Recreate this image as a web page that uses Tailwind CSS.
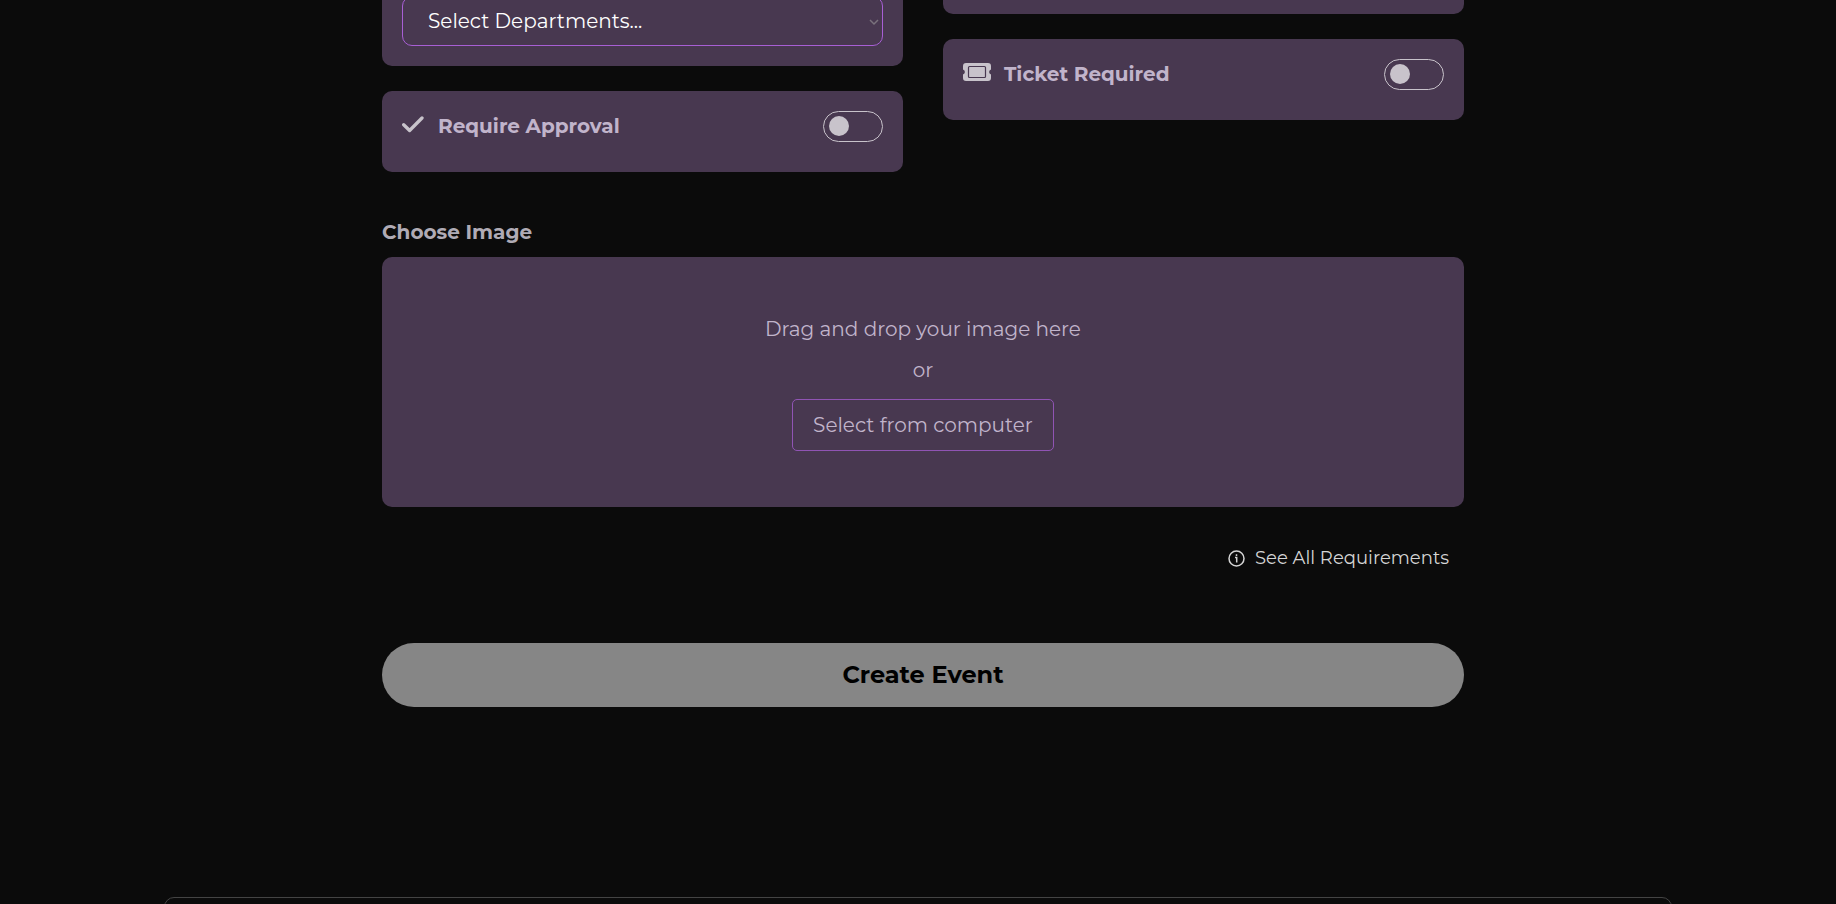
<!DOCTYPE html>
<html lang="en">
<head>
<meta charset="utf-8">
<meta name="viewport" content="width=device-width, initial-scale=1">
<title>Create Event</title>
<script src="https://cdn.jsdelivr.net/npm/@tailwindcss/browser@4"></script>
</head>
<body class="h-screen overflow-hidden bg-[#0b0b0b] font-[Montserrat,Inter,sans-serif] text-xl text-[#c1b4cb]">
<main class="-mt-6 pl-[10px]">
  <form class="mx-auto w-full max-w-[1082px]">
    <div class="grid grid-cols-2 items-start gap-x-10">
      <div class="flex flex-col gap-[25px]">
        <section class="rounded-[10px] bg-[#483850] p-5">
          <div class="relative">
            <select aria-label="Departments" class="block h-[50px] w-full appearance-none rounded-[10px] border border-[#a85fd5] bg-transparent pl-[25px] pr-8 text-xl text-white">
              <option>Select Departments...</option>
            </select>
            <svg class="pointer-events-none absolute right-1 top-[22px] h-2 w-[10px]" viewBox="0 0 10 8" fill="none" stroke="#79717c" stroke-width="1.5" aria-hidden="true"><path d="M1 2l4 4 4-4"/></svg>
          </div>
        </section>
        <section class="rounded-[10px] bg-[#483850] px-5 pt-5 pb-[30px]">
          <div class="flex items-center">
            <svg class="-mt-1.5 mr-[14px] h-[22px] w-[22px]" viewBox="0 0 22 22" fill="none" stroke="#c8c3cb" stroke-width="3.3" stroke-linecap="round" stroke-linejoin="round" aria-hidden="true"><path d="M1.700 11.700l5.900 5.800L20 5"/></svg>
            <label for="approval" class="flex-1 text-xl leading-[31px] font-bold">Require Approval</label>
            <input id="approval" type="checkbox" role="switch" class="block h-[31px] w-[60px] appearance-none rounded-full border border-[#c8c3cb] p-1 pl-[5px] before:block before:h-5 before:w-5 before:rounded-full before:bg-[#c8c3cb]">
          </div>
        </section>
      </div>
      <div class="flex flex-col gap-[25px]">
        <section class="h-[38px] rounded-[10px] bg-[#483850]"></section>
        <section class="rounded-[10px] bg-[#483850] px-5 pt-5 pb-[30px]">
          <div class="flex items-center">
            <svg class="-mt-1.5 mr-[13px] h-[18px] w-7" viewBox="0 0 28 18" aria-hidden="true">
              <path fill="#c8c3cb" d="M3 0H25a3 3 0 0 1 3 3V6.500a2.600 2.600 0 0 0 0 5V15a3 3 0 0 1-3 3H3a3 3 0 0 1-3-3V11.500a2.600 2.600 0 0 0 0-5V3a3 3 0 0 1 3-3Z"/>
              <rect x="5.500" y="3.500" width="17" height="11" rx="1" fill="none" stroke="#483850" stroke-width="1.200"/>
            </svg>
            <label for="ticket" class="flex-1 text-xl leading-[31px] font-bold">Ticket Required</label>
            <input id="ticket" type="checkbox" role="switch" class="block h-[31px] w-[60px] appearance-none rounded-full border border-[#c8c3cb] p-1 pl-[5px] before:block before:h-5 before:w-5 before:rounded-full before:bg-[#c8c3cb]">
          </div>
        </section>
      </div>
    </div>

    <h2 class="mt-12 mb-3 text-xl leading-[25px] font-bold text-[#b0abb5]">Choose Image</h2>
    <div class="flex h-[250px] flex-col items-center gap-4 rounded-[10px] bg-[#483850] pt-[60px] text-xl leading-[25px]">
      <p>Drag and drop your image here</p>
      <p>or</p>
      <button type="button" class="h-[52px] rounded-[5px] border border-[#9054b4] px-5">Select from computer</button>
    </div>

    <div class="flex justify-end pr-[15px]">
      <a href="#requirements" class="mt-[39px] mb-10 flex items-center gap-2.5 text-lg leading-6 text-[#d5d5d5]">
        <svg class="h-[17px] w-[17px]" viewBox="0 0 17 17" fill="none" stroke="currentColor" stroke-width="1.500" aria-hidden="true"><circle cx="8.500" cy="8.500" r="7.500"/><path d="M7 7.500h1.700v5M8.500 4.300v1.600"/></svg>
        See All Requirements
      </a>
    </div>

    <button type="button" class="mt-[33px] block h-16 w-full rounded-full bg-[#868686] text-2xl font-bold text-black">Create Event</button>
  </form>
</main>
<footer class="mx-[164px] mt-[190px] h-20 rounded-[10px] border border-[#444444]"></footer>
</body>
</html>
